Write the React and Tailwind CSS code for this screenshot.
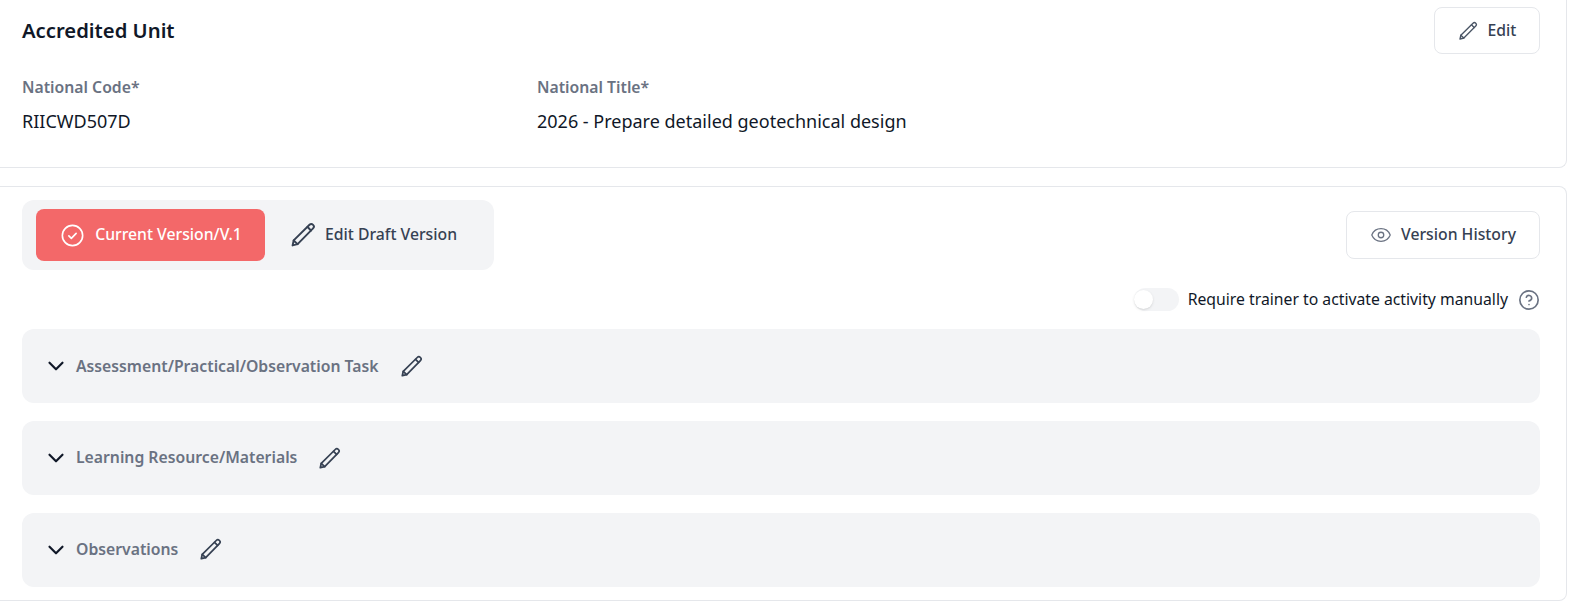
import React, { useState } from 'react';
import { ChevronDown, Eye, CircleHelp } from 'lucide-react';

// slim pencil used across the page, lucide's one is too chunky
const PencilIcon = ({ className, strokeWidth = 1.8 }) => (
  <svg viewBox="0 0 24 24" fill="none" stroke="currentColor" strokeWidth={strokeWidth} strokeLinecap="round" strokeLinejoin="round" className={className}>
    <path d="M2.4 21.6 3.4 17 18 2.6a2.3 2.3 0 0 1 3.3 3.3L7 20.4z" />
    <path d="M16.2 4.6 19.4 7.8" />
    <path d="M3.4 17 7 20.4" />
  </svg>
);

const CheckCircle = ({ className }) => (
  <svg viewBox="0 0 24 24" fill="none" stroke="currentColor" strokeWidth="1.7" strokeLinecap="round" strokeLinejoin="round" className={className}>
    <circle cx="12" cy="12" r="10.6" />
    <path d="m8.2 12.4 2.6 2.6 5-5.2" />
  </svg>
);

const sections = [
  { id: 1, title: 'Assessment/Practical/Observation Task' },
  { id: 2, title: 'Learning Resource/Materials' },
  { id: 3, title: 'Observations' }
];

const App = () => {
  const [requireTrainer, setRequireTrainer] = useState(false);

  return (
    <div className="min-h-screen bg-white pr-[3px] font-['Noto_Sans',sans-serif]">
      {/* Unit details */}
      <div className="h-[168px] rounded-br-lg border-r border-b border-gray-200 pt-[7px] pr-[26px] pl-[22px]">
        <div className="flex items-center justify-between">
          <h1 className="pb-[2px] text-[20.25px] leading-7 font-semibold text-gray-900">Accredited Unit</h1>
          <button className="flex h-[47px] w-[106px] items-center justify-center gap-[10px] rounded-lg border border-gray-200 bg-white text-[15.75px] font-medium text-gray-700">
            <PencilIcon className="h-[20px] w-[20px] text-gray-600" strokeWidth={1.6} />
            Edit
          </button>
        </div>
        <div className="mt-[23px] grid grid-cols-[515px_1fr]">
          <div>
            <p className="text-[15.75px] leading-5 font-semibold text-gray-500">National Code*</p>
            <p className="mt-[12px] text-lg leading-6 text-gray-900">RIICWD507D</p>
          </div>
          <div>
            <p className="text-[15.75px] leading-5 font-semibold text-gray-500">National Title*</p>
            <p className="mt-[12px] text-lg leading-6 text-gray-900">2026 - Prepare detailed geotechnical design</p>
          </div>
        </div>
      </div>

      {/* Versions */}
      <div className="mt-[18px] rounded-r-lg border-y border-r border-gray-200 pt-[13px] pr-[26px] pb-[13px] pl-[22px]">
        <div className="flex items-center justify-between">
          <div className="flex h-[70px] w-[472px] items-center rounded-xl bg-gray-100 px-[14px]">
            <button className="flex h-[52px] w-[229px] items-center justify-center gap-[11px] rounded-lg bg-[#f36869] pl-[2px] text-[15.75px] font-medium text-white">
              <CheckCircle className="h-[23px] w-[23px]" />
              Current Version/V.1
            </button>
            <button className="ml-[25px] flex items-center gap-[9px] text-[15.75px] font-medium text-gray-700">
              <PencilIcon className="h-[26px] w-[26px] text-gray-700" />
              Edit Draft Version
            </button>
          </div>
          <button className="flex h-[48px] w-[194px] items-center justify-center gap-[9px] rounded-lg border border-gray-200 bg-white text-[15.75px] font-medium text-gray-700">
            <Eye className="h-[22px] w-[22px] text-gray-500" strokeWidth={1.4} />
            Version History
          </button>
        </div>

        <div className="mt-[18px] flex h-[23px] items-center justify-end">
          <button
            onClick={() => setRequireTrainer(!requireTrainer)}
            className={`flex h-[23px] w-[45px] items-center rounded-full bg-gray-100 ${requireTrainer ? 'justify-end' : 'justify-start'}`}
          >
            <span className="h-[19px] w-[19px] rounded-full bg-white shadow"></span>
          </button>
          <span className="ml-[9px] text-[15.75px] text-gray-900">Require trainer to activate activity manually</span>
          <CircleHelp className="ml-[10px] h-[22px] w-[22px] text-gray-500" strokeWidth={1.8} />
        </div>

        <div className="mt-[18.45px] flex flex-col gap-[17.75px]">
          {sections.map(section => (
            <div key={section.id} className="flex h-[74px] items-center rounded-xl bg-gray-100 pl-[21px]">
              <ChevronDown className="h-[26px] w-[26px] text-gray-900" strokeWidth={2} />
              <span className="ml-[7px] text-[15.75px] font-semibold text-gray-500">{section.title}</span>
              <PencilIcon className="ml-[21px] h-[23px] w-[23px] text-gray-700" />
            </div>
          ))}
        </div>
      </div>
    </div>
  );
};

export default App;
